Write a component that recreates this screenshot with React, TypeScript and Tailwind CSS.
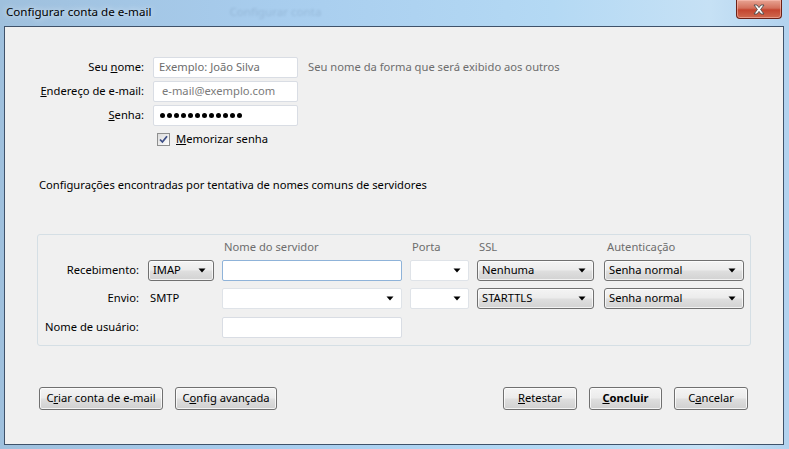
import React from "react";

const font = { fontFamily: '"Noto Sans", "Liberation Sans", sans-serif' };

function Arrow() {
  return (
    <svg width="8" height="5" viewBox="0 0 8 5" className="shrink-0">
      <path d="M0.5 0.5 L7.5 0.5 L4 4.5 Z" fill="#000" />
    </svg>
  );
}

function GraySelect({ label, w }: { label: string; w: string }) {
  return (
    <div
      className={`${w} h-[21px] flex items-center justify-between pl-[4px] pr-[7px] border border-[#707070] rounded-[3px] bg-[linear-gradient(to_bottom,#f4f4f4_0%,#ececec_45%,#dedede_55%,#d2d2d2_100%)] text-black shadow-[inset_0_0_0_1px_rgba(255,255,255,0.7)]`}
    >
      <span>{label}</span>
      <Arrow />
    </div>
  );
}

function WhiteCombo({ w }: { w: string }) {
  return (
    <div className={`${w} h-[21px] flex items-center justify-end pr-[7px] border border-[#dfe3e8] rounded-[2px] bg-white`}>
      <Arrow />
    </div>
  );
}

function TextBox({ w, children, focus }: { w: string; children?: React.ReactNode; focus?: boolean }) {
  return (
    <div
      className={`${w} h-[21px] flex items-center px-[6px] border ${focus ? "border-[#8fb3d9]" : "border-[#d9dde4]"} rounded-[2px] bg-white`}
    >
      {children}
    </div>
  );
}

function Btn({ w, children, bold }: { w: string; children: React.ReactNode; bold?: boolean }) {
  return (
    <div
      className={`${w} h-[23px] flex items-center justify-center border border-[#707070] rounded-[3px] bg-[linear-gradient(to_bottom,#f4f4f4_0%,#ececec_45%,#dedede_55%,#d0d0d0_100%)] shadow-[inset_0_0_0_1px_rgba(255,255,255,0.75)] text-black whitespace-nowrap ${bold ? "font-bold" : ""}`}
    >
      {children}
    </div>
  );
}

export default function App() {
  return (
    <div
      className="w-[789px] h-[449px] relative overflow-hidden bg-[linear-gradient(90deg,#9fc0dd_0%,#a8cdee_35%,#b4d9f4_70%,#c6e1f5_90%,#b2d2ee_100%)] text-[11.2px] text-black whitespace-nowrap"
      style={font}
    >
      {/* title bar */}
      <div className="h-[26px] flex items-center pl-[6px] pb-[2px]">
        <span className="text-[11.6px] text-black [text-shadow:0_0_6px_rgba(255,255,255,0.9)]">Configurar conta de e-mail</span>
        <span className="ml-[78px] text-[11.6px] text-[#4a6684] opacity-20 blur-[1px]">Configurar conta</span>
      </div>

      {/* close button */}
      <div className="absolute top-0 right-[7px] w-[46px] h-[19px] rounded-b-[4px] border border-t-0 border-[#6b2117] bg-[linear-gradient(to_bottom,#e8a493_0%,#d3705c_45%,#c4452f_55%,#cf6a4f_100%)] flex items-center justify-center shadow-[inset_0_0_0_1px_rgba(255,200,190,0.5)]">
        <svg width="14" height="11" viewBox="0 0 14 11">
          <path d="M2 1 L5 1 L7 3.6 L9 1 L12 1 L8.6 5.5 L12 10 L9 10 L7 7.4 L5 10 L2 10 L5.4 5.5 Z" fill="#fff" stroke="#4a4a4a" strokeWidth="0.9" strokeLinejoin="round" />
        </svg>
      </div>

      {/* client area */}
      <div className="mx-[4px] w-[780px] h-[419px] border border-[#3f526a] bg-[#f0f0f0] flex flex-col">
        {/* form */}
        <div className="pt-[30px] flex flex-col gap-[3px]">
          <div className="flex items-center h-[21px]">
            <div className="w-[139px] text-right">Seu <span className="underline">n</span>ome:</div>
            <div className="ml-[9px]">
              <TextBox w="w-[145px]"><span className="text-[#6d6d6d] -ml-[1px]">Exemplo: João Silva</span></TextBox>
            </div>
            <div className="ml-[10px] text-[#6d6d6d]">Seu nome da forma que será exibido aos outros</div>
          </div>
          <div className="flex items-center h-[21px]">
            <div className="w-[139px] text-right"><span className="underline">E</span>ndereço de e-mail:</div>
            <div className="ml-[9px]">
              <TextBox w="w-[145px]"><span className="text-[#7a7a7a] ml-[2px]">e-mail@exemplo.com</span></TextBox>
            </div>
          </div>
          <div className="flex items-center h-[21px]">
            <div className="w-[139px] text-right"><span className="underline">S</span>enha:</div>
            <div className="ml-[9px]">
              <TextBox w="w-[145px]">
                <div className="flex gap-[2px]">
                  {Array.from({ length: 12 }).map((_, i) => (
                    <div key={i} className="w-[5px] h-[5px] rounded-full bg-black" />
                  ))}
                </div>
              </TextBox>
            </div>
          </div>
          <div className="flex items-center h-[20px]">
            <div className="ml-[152px] w-[13px] h-[13px] border border-[#8e8f8f] bg-[linear-gradient(135deg,#dcdcdc,#fdfdfd)] flex items-center justify-center">
              <svg width="9" height="9" viewBox="0 0 9 9">
                <path d="M1 4.5 L3.4 7 L8 1.2" fill="none" stroke="#3d4e86" strokeWidth="1.8" />
              </svg>
            </div>
            <div className="ml-[6px]"><span className="underline">M</span>emorizar senha</div>
          </div>
        </div>

        <div className="mt-[28px] pl-[34px] h-[16px] leading-[16px]">
          Configurações encontradas por tentativa de nomes comuns de servidores
        </div>

        {/* server group */}
        <div className="mt-[41px] ml-[32px] w-[714px] h-[112px] border border-[#d5dfe5] rounded-[3px] flex flex-col">
          <div className="mt-[4px] h-[16px] leading-[16px] flex text-[#6d6d6d]">
            <div className="w-[184px]" />
            <div className="w-[188px] pl-[2px]">Nome do servidor</div>
            <div className="w-[67px] pl-[2px]">Porta</div>
            <div className="w-[127px] pl-[2px]">SSL</div>
            <div className="pl-[3px]">Autenticação</div>
          </div>
          <div className="mt-[5px] flex items-center h-[21px]">
            <div className="w-[101px] text-right">Recebimento:</div>
            <div className="ml-[9px]"><GraySelect label="IMAP" w="w-[66px]" /></div>
            <div className="ml-[8px]"><TextBox w="w-[180px]" focus /></div>
            <div className="ml-[8px]"><WhiteCombo w="w-[59px]" /></div>
            <div className="ml-[8px]"><GraySelect label="Nenhuma" w="w-[117px]" /></div>
            <div className="ml-[10px]"><GraySelect label="Senha normal" w="w-[140px]" /></div>
          </div>
          <div className="mt-[7px] flex items-center h-[21px]">
            <div className="w-[101px] text-right">Envio:</div>
            <div className="ml-[11px] w-[64px]">SMTP</div>
            <div className="ml-[8px]"><WhiteCombo w="w-[180px]" /></div>
            <div className="ml-[8px]"><WhiteCombo w="w-[59px]" /></div>
            <div className="ml-[8px]"><GraySelect label="STARTTLS" w="w-[117px]" /></div>
            <div className="ml-[10px]"><GraySelect label="Senha normal" w="w-[140px]" /></div>
          </div>
          <div className="mt-[8px] flex items-center h-[20px]">
            <div className="ml-[7px] w-[177px]">Nome de usuário:</div>
            <div><TextBox w="w-[180px]" /></div>
          </div>
        </div>

        {/* buttons */}
        <div className="mt-[41px] flex items-center pl-[34px] pr-[35px]">
          <Btn w="w-[124px]">C<span className="underline">r</span>iar conta de e-mail</Btn>
          <div className="ml-[12px]"><Btn w="w-[102px]">C<span className="underline">o</span>nfig avançada</Btn></div>
          <div className="ml-auto flex gap-[12px]">
            <Btn w="w-[74px]"><span className="underline">R</span>etestar</Btn>
            <Btn w="w-[73px]" bold><span className="underline">C</span>oncluir</Btn>
            <Btn w="w-[74px]">C<span className="underline">a</span>ncelar</Btn>
          </div>
        </div>
      </div>
    </div>
  );
}
